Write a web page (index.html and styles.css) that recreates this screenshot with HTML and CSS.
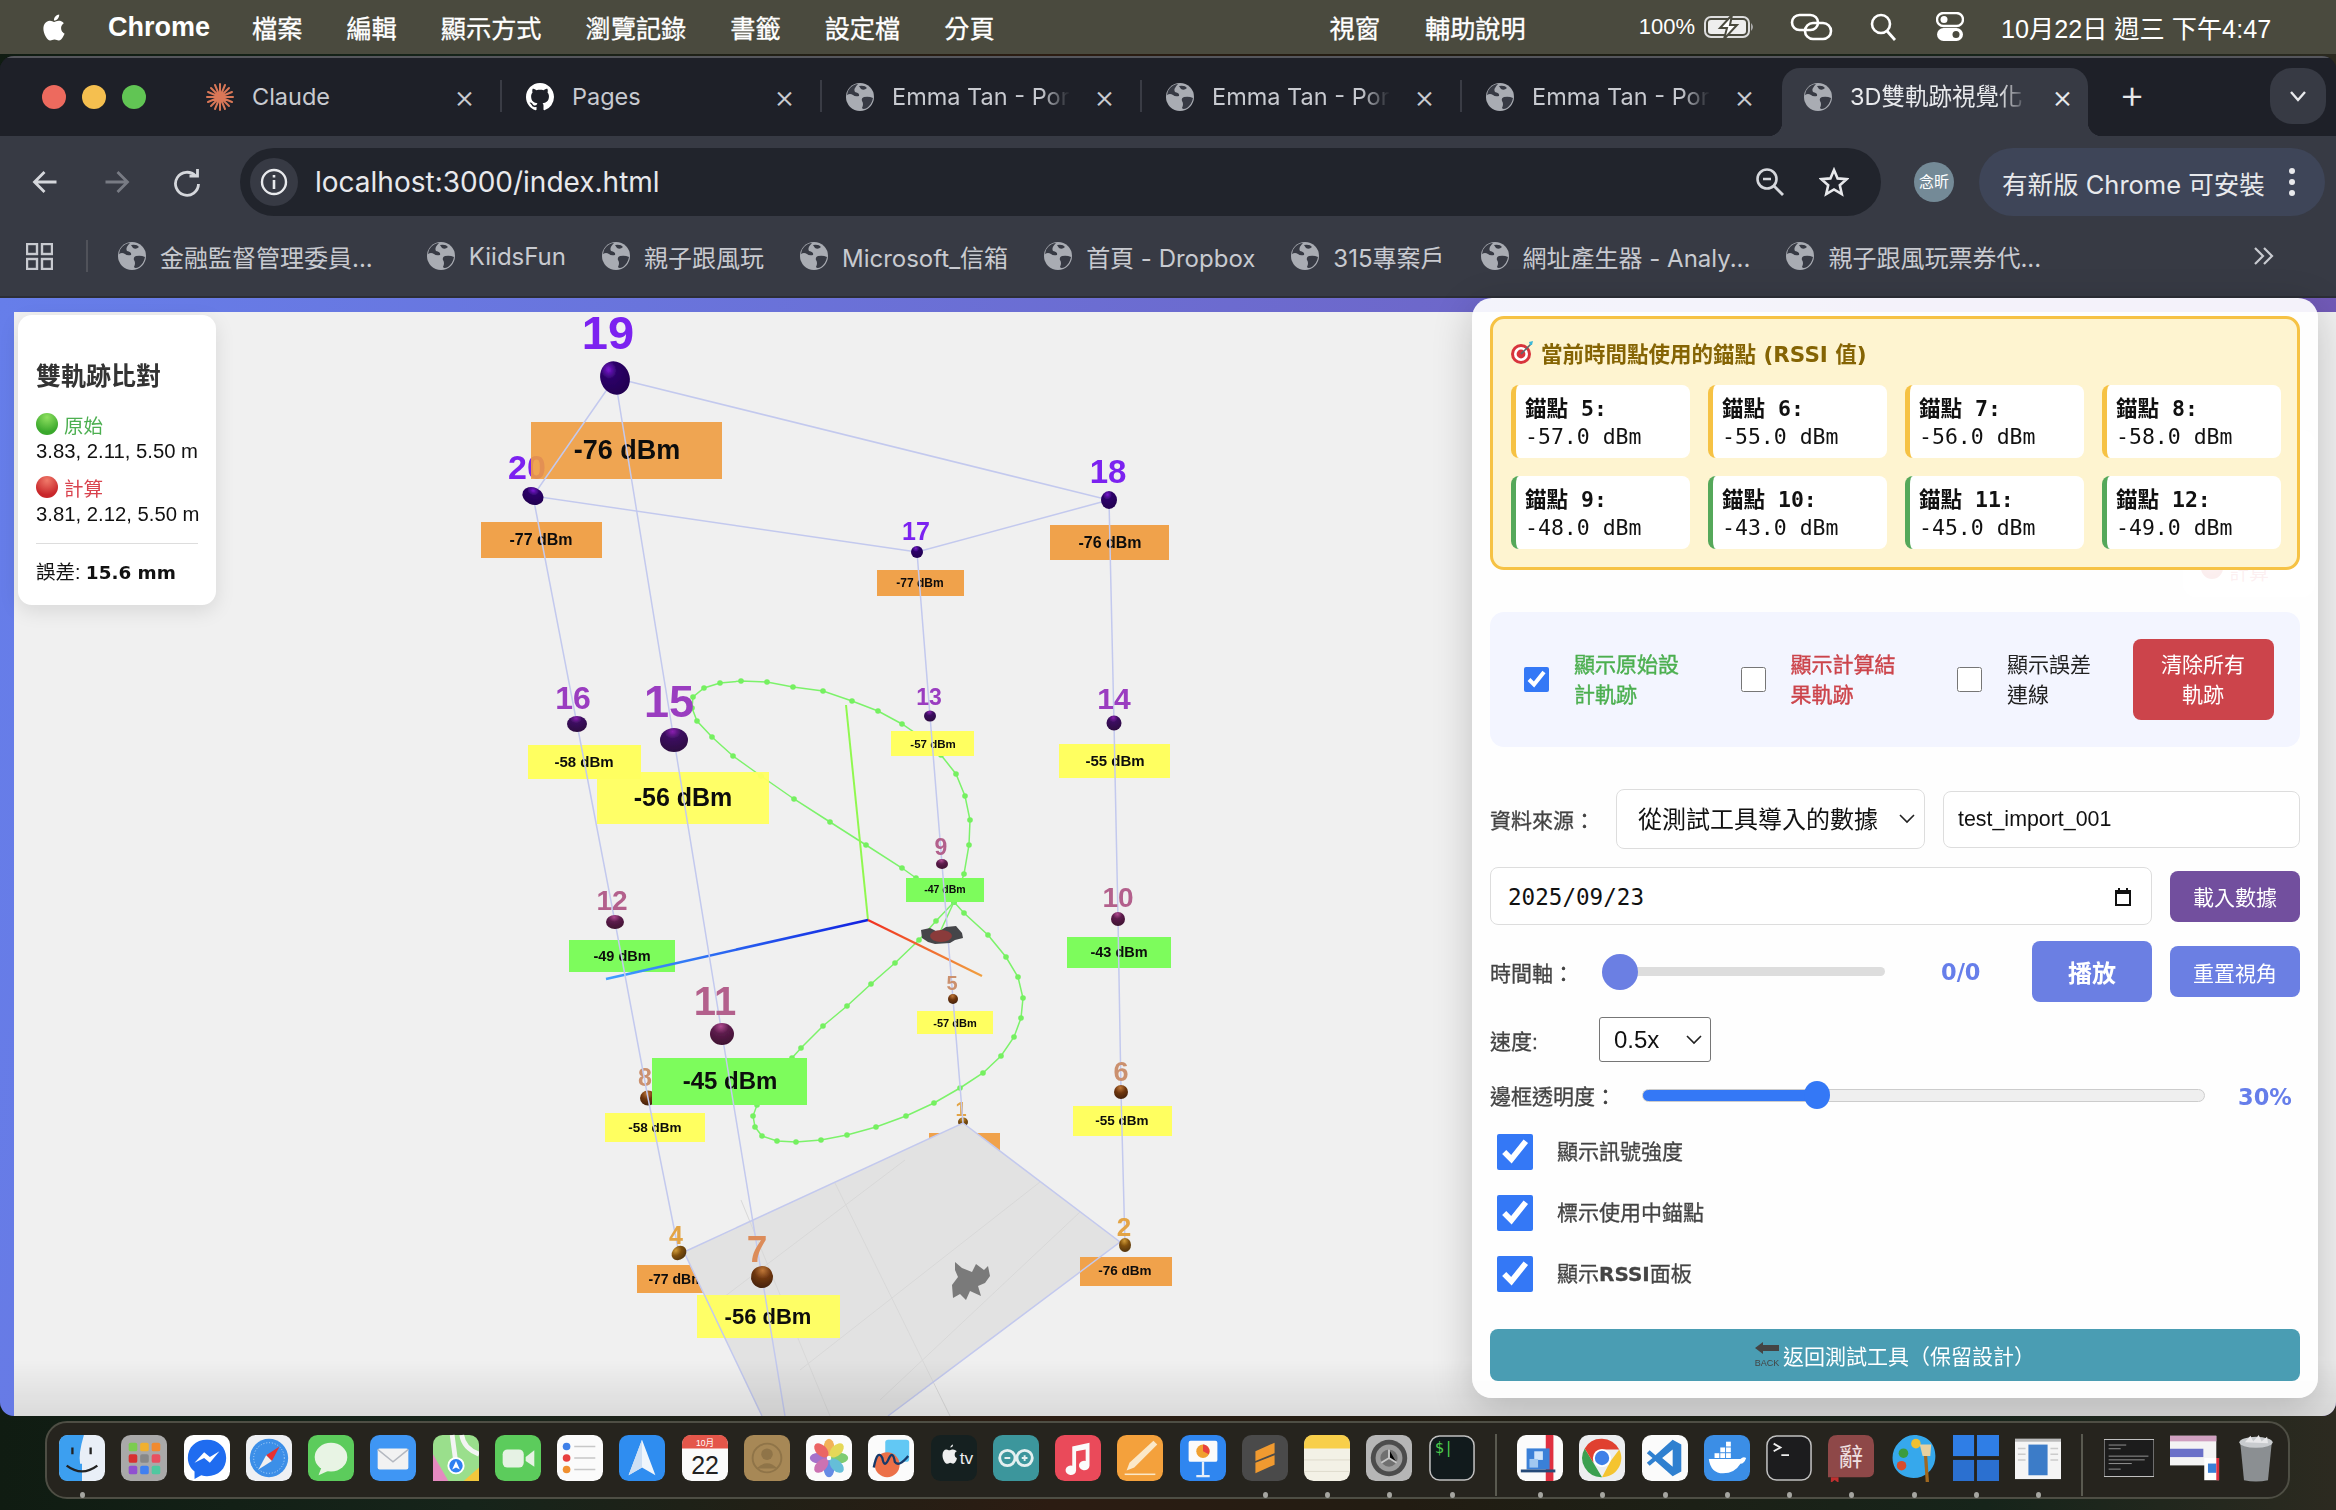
FILE: index.html
```html
<!DOCTYPE html>
<html lang="zh-Hant">
<head>
    <meta charset="UTF-8">
    <title>3D雙軌跡視覺化</title>
    <link rel="stylesheet" href="styles.css">
</head>
<body>
    <svg class="defs" width="0" height="0">
        <symbol id="globe" viewBox="0 0 28 28">
            <circle cx="14" cy="14" r="14" fill="#a9acb3"/>
            <path d="M12 1 Q7 6 9 9 Q14 10 13 13 Q9 14 7 12 Q4 10 1 12 Q1 8 4 5 Q8 1 12 1Z M18 14 Q23 13 27 15 Q26 21 21 25 Q17 27 16 25 Q18 21 16 18 Q15 15 18 14Z M13 3 Q19 2 21 5 Q18 8 15 6Z" fill="#373a44"/>
        </symbol>
    </svg>

    <!-- 메뉴바 -->
    <header class="menubar">
        <svg class="apple" viewBox="0 0 24 24"><path fill="#fff" d="M12.152 6.896c-.948 0-2.415-1.078-3.96-1.04-2.04.027-3.91 1.183-4.961 3.014-2.117 3.675-.546 9.103 1.519 12.09 1.013 1.454 2.208 3.09 3.792 3.039 1.52-.065 2.09-.987 3.935-.987 1.831 0 2.35.987 3.96.948 1.637-.026 2.676-1.48 3.676-2.948 1.156-1.688 1.636-3.325 1.662-3.415-.039-.013-3.182-1.221-3.22-4.857-.026-3.04 2.48-4.494 2.597-4.559-1.429-2.09-3.623-2.324-4.39-2.376-2-.156-3.675 1.09-4.61 1.09zM15.53 3.83c.843-1.012 1.4-2.427 1.245-3.83-1.207.052-2.662.805-3.532 1.818-.78.896-1.454 2.338-1.273 3.714 1.338.104 2.715-.688 3.559-1.701"/></svg>
        <b class="app-name">Chrome</b>
        <nav class="menu-items">
            <span>檔案</span><span>編輯</span><span>顯示方式</span><span>瀏覽記錄</span><span>書籤</span><span>設定檔</span><span>分頁</span>
        </nav>
        <nav class="menu-items menu-right">
            <span>視窗</span><span>輔助說明</span>
        </nav>
        <span class="battery-text">100%</span>
        <svg class="battery" width="52" height="26" viewBox="0 0 52 26"><rect x="1" y="3" width="44" height="20" rx="6" fill="none" stroke="#ddd" stroke-width="2"/><rect x="4" y="6" width="38" height="14" rx="3" fill="#eee"/><path d="M47 9 q4 4 0 8z" fill="#aaa"/><path d="M28 1 L16 14 H23 L20 25 L33 11 H26Z" fill="#fff" stroke="#4a4a3e" stroke-width="2"/></svg>
        <svg class="status-icon link-icon" width="44" height="28" viewBox="0 0 44 28"><g fill="none" stroke="#fff" stroke-width="2.6"><rect x="2" y="2" width="26" height="15" rx="7.5"/><rect x="15" y="10" width="26" height="16" rx="8"/></g></svg>
        <svg class="status-icon search-icon" width="28" height="28" viewBox="0 0 28 28"><circle cx="12" cy="11" r="9" fill="none" stroke="#fff" stroke-width="2.6"/><path d="M18 18 L26 27" stroke="#fff" stroke-width="2.8"/></svg>
        <svg class="status-icon cc-icon" width="28" height="30" viewBox="0 0 28 30"><rect x="1" y="1" width="26" height="13" rx="6.5" fill="none" stroke="#fff" stroke-width="2.4"/><circle cx="8" cy="7.5" r="3.5" fill="#fff"/><rect x="1" y="16" width="26" height="13" rx="6.5" fill="#fff"/><circle cx="20" cy="22.5" r="3.5" fill="#4a4a3e"/></svg>
        <span class="clock">10月22日 週三 下午4:47</span>
    </header>

    <main class="window">
        <!-- 탭 -->
        <div class="tabstrip">
            <div class="lights"><i class="light red"></i><i class="light yellow"></i><i class="light green"></i></div>
            <div class="tab">
                <svg class="favicon" viewBox="0 0 28 28"><g stroke="#d97757" stroke-width="2" stroke-linecap="round"><path d="M14 1V27M1 14H27M5 5L23 23M5 23L23 5M9 2L19 26M19 2L9 26M2 9L26 19M2 19L26 9"/></g></svg>
                <span class="tab-title">Claude</span><span class="tab-close">×</span>
            </div>
            <div class="tab">
                <svg class="favicon" viewBox="0 0 16 16"><path fill="#fff" d="M8 0C3.58 0 0 3.58 0 8c0 3.54 2.29 6.53 5.47 7.59.4.07.55-.17.55-.38 0-.19-.01-.82-.01-1.49-2.01.37-2.53-.49-2.69-.94-.09-.23-.48-.94-.82-1.13-.28-.15-.68-.52-.01-.53.63-.01 1.08.58 1.23.82.72 1.21 1.87.87 2.33.66.07-.52.28-.87.51-1.07-1.78-.2-3.64-.89-3.64-3.95 0-.87.31-1.59.82-2.15-.08-.2-.36-1.02.08-2.12 0 0 .67-.21 2.2.82.64-.18 1.32-.27 2-.27.68 0 1.36.09 2 .27 1.53-1.04 2.2-.82 2.2-.82.44 1.1.16 1.92.08 2.12.51.56.82 1.27.82 2.15 0 3.07-1.87 3.75-3.65 3.95.29.25.54.73.54 1.48 0 1.07-.01 1.93-.01 2.2 0 .21.15.46.55.38A8.013 8.013 0 0016 8c0-4.42-3.58-8-8-8z"/></svg>
                <span class="tab-title">Pages</span><span class="tab-close">×</span>
            </div>
            <div class="tab"><svg class="favicon"><use href="#globe"/></svg><span class="tab-title fade">Emma Tan - Por</span><span class="tab-close">×</span></div>
            <div class="tab"><svg class="favicon"><use href="#globe"/></svg><span class="tab-title fade">Emma Tan - Por</span><span class="tab-close">×</span></div>
            <div class="tab no-sep"><svg class="favicon"><use href="#globe"/></svg><span class="tab-title fade">Emma Tan - Por</span><span class="tab-close">×</span></div>
            <div class="tab active"><svg class="favicon"><use href="#globe"/></svg><span class="tab-title fade">3D雙軌跡視覺化</span><span class="tab-close">×</span></div>
            <span class="new-tab">+</span>
            <div class="tab-menu"><svg width="20" height="12" viewBox="0 0 20 12"><path d="M3 2 L10 10 L17 2" fill="none" stroke="#e8e9ec" stroke-width="2.4"/></svg></div>
        </div>

        <div class="toolbar">
            <div class="addr-row">
                <svg class="nav-btn" viewBox="0 0 70 30"><path d="M46 15H25M34 5L24 15L34 25" fill="none" stroke="#d5d7dc" stroke-width="2.8"/></svg>
                <svg class="nav-btn" viewBox="0 0 70 30"><path d="M24 15H45M36 5L46 15L36 25" fill="none" stroke="#787b84" stroke-width="2.8"/></svg>
                <svg class="nav-btn" viewBox="0 0 70 30"><path d="M43 9 A11.5 11.5 0 1 0 46 17" fill="none" stroke="#d5d7dc" stroke-width="2.8"/><path d="M37 9 H45 V2" fill="none" stroke="#d5d7dc" stroke-width="2.8"/></svg>
                <div class="addr-pill">
                    <div class="info-chip"><svg width="28" height="28" viewBox="0 0 28 28"><circle cx="14" cy="14" r="12" fill="none" stroke="#e8e9ec" stroke-width="2.4"/><path d="M14 12V21M14 7V9.6" stroke="#e8e9ec" stroke-width="2.6"/></svg></div>
                    <span class="url">localhost:3000/index.html</span>
                    <svg class="pill-icon zoom-icon" width="30" height="30" viewBox="0 0 30 30"><circle cx="12" cy="12" r="9.5" fill="none" stroke="#d5d7dc" stroke-width="2.6"/><path d="M8 12H16" stroke="#d5d7dc" stroke-width="2.4"/><path d="M19 19L28 28" stroke="#d5d7dc" stroke-width="2.8"/></svg>
                    <svg class="pill-icon star-icon" width="30" height="30" viewBox="0 0 30 30"><path d="M15 3 L18.6 11.4 L27.6 12.2 L20.8 18.2 L22.8 27 L15 22.4 L7.2 27 L9.2 18.2 L2.4 12.2 L11.4 11.4Z" fill="none" stroke="#e8e9ec" stroke-width="2.6"/></svg>
                </div>
                <span class="avatar">念昕</span>
                <div class="update-pill"><span>有新版 Chrome 可安裝</span><svg width="8" height="30" viewBox="0 0 8 30"><circle cx="4" cy="4" r="3" fill="#e8e9ec"/><circle cx="4" cy="15" r="3" fill="#e8e9ec"/><circle cx="4" cy="26" r="3" fill="#e8e9ec"/></svg></div>
            </div>
            <div class="bookmarks">
                <svg class="apps" width="27" height="27" viewBox="0 0 27 27"><g fill="none" stroke="#c8cad0" stroke-width="2.4"><rect x="1" y="1" width="10" height="10"/><rect x="16" y="1" width="10" height="10"/><rect x="1" y="16" width="10" height="10"/><rect x="16" y="16" width="10" height="10"/></g></svg>
                <i class="bm-sep"></i>
                <span class="bm bm-first"><svg class="bm-icon"><use href="#globe"/></svg>金融監督管理委員...</span>
                <span class="bm"><svg class="bm-icon"><use href="#globe"/></svg>KiidsFun</span>
                <span class="bm"><svg class="bm-icon"><use href="#globe"/></svg>親子跟風玩</span>
                <span class="bm"><svg class="bm-icon"><use href="#globe"/></svg>Microsoft_信箱</span>
                <span class="bm"><svg class="bm-icon"><use href="#globe"/></svg>首頁 - Dropbox</span>
                <span class="bm"><svg class="bm-icon"><use href="#globe"/></svg>315專案戶</span>
                <span class="bm"><svg class="bm-icon"><use href="#globe"/></svg>網址產生器 - Analy...</span>
                <span class="bm"><svg class="bm-icon"><use href="#globe"/></svg>親子跟風玩票券代...</span>
                <svg class="bm-more" width="22" height="20" viewBox="0 0 22 20"><path d="M2 2 L10 10 L2 18 M11 2 L19 10 L11 18" fill="none" stroke="#c8cad0" stroke-width="2.2"/></svg>
            </div>
        </div>

        <div class="page">
            <div class="stage">
                <!-- 3D 장면: 좌표는 화면 좌표 그대로 -->
                <svg class="scene" width="2322" height="1104" viewBox="14 312 2322 1104">
                    <defs>
                        <radialGradient id="ball-violet" cx=".4" cy=".2" r=".8"><stop offset="0" stop-color="#7a18d0"/><stop offset=".35" stop-color="#2c0468"/><stop offset="1" stop-color="#220050"/></radialGradient>
                        <radialGradient id="ball-purple" cx=".45" cy=".15" r=".85"><stop offset="0" stop-color="#8a20b0"/><stop offset=".35" stop-color="#3c1060"/><stop offset="1" stop-color="#2c0a40"/></radialGradient>
                        <radialGradient id="ball-plum" cx=".45" cy=".15" r=".85"><stop offset="0" stop-color="#b04a90"/><stop offset=".4" stop-color="#5c1c4c"/><stop offset="1" stop-color="#3e1030"/></radialGradient>
                        <radialGradient id="ball-brown" cx=".45" cy=".2" r=".85"><stop offset="0" stop-color="#c07838"/><stop offset=".45" stop-color="#6e3610"/><stop offset="1" stop-color="#40200c"/></radialGradient>
                        <radialGradient id="ball-amber" cx=".45" cy=".2" r=".85"><stop offset="0" stop-color="#d09a38"/><stop offset=".45" stop-color="#80500c"/><stop offset="1" stop-color="#4c3008"/></radialGradient>
                        <linearGradient id="axis-red" x1="0" y1="0" x2="1" y2="1"><stop offset="0" stop-color="#f03020"/><stop offset="1" stop-color="#f0a040"/></linearGradient>
                        <linearGradient id="axis-blue" x1="1" y1="0" x2="0" y2="1"><stop offset="0" stop-color="#1020e0"/><stop offset="1" stop-color="#40a0ff"/></linearGradient>
                        <linearGradient id="floor-shade" x1="0" y1="0" x2="0" y2="1"><stop offset="0" stop-color="#000" stop-opacity="0"/><stop offset="1" stop-color="#000" stop-opacity=".09"/></linearGradient>
                        <marker id="dot" markerUnits="userSpaceOnUse" markerWidth="8" markerHeight="8" refX="4" refY="4"><circle cx="4" cy="4" r="2.8" fill="#74f060"/></marker>
                        <filter id="soft"><feGaussianBlur stdDeviation=".55"/></filter>
                    </defs>
                    <g filter="url(#soft)">
                        <!-- 뒤에 깔리는 노드 -->
                        <text class="num c-violet" x="527" y="479" font-size="34">20</text>
                        <text class="num c-tan" x="645" y="1086" font-size="25">8</text>
                        <ellipse cx="648" cy="1098" rx="8" ry="7.5" fill="url(#ball-brown)"/>
                        <text class="num c-amber" x="961" y="1116" font-size="20">1</text>
                        <ellipse cx="963" cy="1122" rx="5" ry="4.5" fill="url(#ball-amber)"/>

                        <rect class="b-orange" x="929" y="1133" width="71" height="40"/>
                        <rect class="b-orange" x="637" y="1265" width="98" height="28"/>
                        <text class="db" x="676" y="1284" font-size="14">-77 dBm</text>

                        <!-- 바닥판 -->
                        <polygon class="plane" points="963,1123 1120,1242 888,1416 762,1416 684,1252"/>
                        <path class="plane-grid" d="M835,1183 L950,1416 M741,1200 L830,1416 M1040,1182 L800,1370 M905,1160 L720,1300 M1080,1212 L880,1400"/>
                        <polygon class="blob-gray" points="955,1262 962,1268 972,1272 976,1264 984,1270 988,1266 990,1276 985,1283 978,1286 981,1296 970,1291 966,1300 960,1294 953,1298 952,1285 958,1277 955,1270"/>

                        <!-- 궤적 -->
                        <polyline class="trail" points="954,902 964,874 969,845 970,820 965,796 956,774 941,755 924,739 902,724 878,711 852,701 823,691 793,687 767,682 741,681 720,683 704,688 693,697 692,708 697,721 712,737 733,756 761,776 794,799 830,822 866,845 902,868 916,878"/>
                        <polyline class="trail" points="954,902 964,913 988,935 1006,957 1018,977 1023,998 1021,1018 1014,1037 1001,1056 983,1073 960,1088 934,1103 906,1116 876,1127 847,1135 821,1140 796,1142 777,1141 762,1136 755,1127 753,1116 757,1105 792,1058 801,1048 823,1026 847,1006 871,984 895,963 919,940 936,921 954,902"/>
                        <line class="trail-plain" x1="954" y1="902" x2="940" y2="932"/>

                        <!-- 라벨 판 -->
                        <rect class="b-orange see-top" x="531" y="422" width="191" height="57"/>
                        <text class="db" x="627" y="459" font-size="27">-76 dBm</text>
                        <rect class="b-orange" x="481" y="522" width="121" height="36"/>
                        <text class="db" x="541" y="545" font-size="16">-77 dBm</text>
                        <rect class="b-orange" x="1050" y="525" width="119" height="35"/>
                        <text class="db" x="1110" y="548" font-size="16">-76 dBm</text>
                        <rect class="b-orange" x="877" y="570" width="87" height="26"/>
                        <text class="db" x="920" y="587" font-size="12">-77 dBm</text>
                        <rect class="b-yellow" x="528" y="745" width="113" height="34"/>
                        <text class="db" x="584" y="767" font-size="15">-58 dBm</text>
                        <rect class="b-yellow see" x="597" y="772" width="172" height="52"/>
                        <text class="db" x="683" y="806" font-size="25">-56 dBm</text>
                        <rect class="b-yellow" x="891" y="731" width="83" height="25"/>
                        <text class="db" x="933" y="748" font-size="11.5">-57 dBm</text>
                        <rect class="b-yellow" x="1059" y="744" width="111" height="34"/>
                        <text class="db" x="1115" y="766" font-size="15">-55 dBm</text>
                        <rect class="b-green" x="906" y="878" width="78" height="24"/>
                        <text class="db" x="945" y="893" font-size="10.5">-47 dBm</text>
                        <rect class="b-green" x="569" y="940" width="106" height="32"/>
                        <text class="db" x="622" y="961" font-size="14.5">-49 dBm</text>
                        <rect class="b-green" x="1067" y="937" width="104" height="31"/>
                        <text class="db" x="1119" y="957" font-size="14.5">-43 dBm</text>
                        <rect class="b-green" x="652" y="1058" width="155" height="47"/>
                        <text class="db" x="730" y="1089" font-size="24">-45 dBm</text>
                        <rect class="b-yellow" x="917" y="1011" width="76" height="23"/>
                        <text class="db" x="955" y="1027" font-size="11">-57 dBm</text>
                        <rect class="b-yellow" x="605" y="1113" width="100" height="29"/>
                        <text class="db" x="655" y="1132" font-size="13.5">-58 dBm</text>
                        <rect class="b-yellow" x="1073" y="1106" width="99" height="30"/>
                        <text class="db" x="1122" y="1125" font-size="13.5">-55 dBm</text>
                        <rect class="b-orange" x="1080" y="1257" width="92" height="29"/>
                        <text class="db" x="1125" y="1275" font-size="13.5">-76 dBm</text>
                        <rect class="b-yellow see" x="697" y="1295" width="143" height="43"/>
                        <text class="db" x="768" y="1324" font-size="22">-56 dBm</text>

                        <!-- 축 -->
                        <line x1="868" y1="920" x2="846" y2="705" stroke="#90f850" stroke-width="2"/>
                        <line x1="868" y1="920" x2="606" y2="979" stroke="url(#axis-blue)" stroke-width="2.6"/>
                        <line x1="868" y1="920" x2="982" y2="976" stroke="url(#axis-red)" stroke-width="2.2"/>

                        <!-- 기둥과 연결선 -->
                        <path class="wire" d="M615,378 L1109,500 L917,552 L533,496 L615,378 L674,740 L722,1034 L762,1277 L785,1416 M533,496 L577,724 L615,922 L648,1098 L679,1253 M1109,500 L1114,723 L1118,919 L1121,1092 L1125,1245 M917,552 L930,716 L942,864 L953,999 L963,1123 M684,1252 L963,1123 L1120,1242 L888,1416 M684,1252 L762,1416"/>

                        <!-- 앞쪽 노드 -->
                        <ellipse cx="533" cy="496" rx="11" ry="8.5" transform="rotate(25 533 496)" fill="url(#ball-violet)"/>
                        <text class="num c-violet" x="608" y="349" font-size="47">19</text>
                        <ellipse cx="615" cy="378" rx="14.5" ry="17" transform="rotate(-22 615 378)" fill="url(#ball-violet)"/>
                        <text class="num c-violet" x="1108" y="483" font-size="33">18</text>
                        <ellipse cx="1109" cy="500" rx="8" ry="9" fill="url(#ball-violet)"/>
                        <text class="num c-violet" x="916" y="540" font-size="25">17</text>
                        <ellipse cx="917" cy="552" rx="6" ry="6" fill="url(#ball-violet)"/>
                        <text class="num c-purple" x="573" y="709" font-size="32">16</text>
                        <ellipse cx="577" cy="724" rx="10" ry="8" fill="url(#ball-purple)"/>
                        <text class="num c-purple" x="669" y="717" font-size="45">15</text>
                        <ellipse cx="674" cy="740" rx="14" ry="12" fill="url(#ball-purple)"/>
                        <text class="num c-purple" x="929" y="705" font-size="23">13</text>
                        <ellipse cx="930" cy="716" rx="6" ry="5.5" fill="url(#ball-purple)"/>
                        <text class="num c-purple" x="1114" y="709" font-size="30">14</text>
                        <ellipse cx="1114" cy="723" rx="7.5" ry="7.5" fill="url(#ball-purple)"/>
                        <text class="num c-plum" x="941" y="855" font-size="23">9</text>
                        <ellipse cx="942" cy="864" rx="6" ry="5" fill="url(#ball-plum)"/>
                        <text class="num c-plum" x="612" y="910" font-size="28">12</text>
                        <ellipse cx="615" cy="922" rx="9" ry="7" fill="url(#ball-plum)"/>
                        <text class="num c-plum" x="1118" y="907" font-size="28">10</text>
                        <ellipse cx="1118" cy="919" rx="7" ry="7" fill="url(#ball-plum)"/>
                        <text class="num c-plum" x="715" y="1015" font-size="40">11</text>
                        <ellipse cx="722" cy="1034" rx="12" ry="11" fill="url(#ball-plum)"/>
                        <text class="num c-tan" x="952" y="990" font-size="20">5</text>
                        <ellipse cx="953" cy="999" rx="5" ry="5" fill="url(#ball-brown)"/>
                        <text class="num c-tan" x="1121" y="1081" font-size="27">6</text>
                        <ellipse cx="1121" cy="1092" rx="7" ry="7" fill="url(#ball-brown)"/>
                        <text class="num c-orange" x="757" y="1262" font-size="37">7</text>
                        <ellipse cx="762" cy="1277" rx="11" ry="11" transform="rotate(15 762 1277)" fill="url(#ball-brown)"/>
                        <text class="num c-amber" x="676" y="1244" font-size="25">4</text>
                        <ellipse cx="679" cy="1253" rx="8" ry="6.5" transform="rotate(-40 679 1253)" fill="url(#ball-amber)"/>
                        <text class="num c-amber" x="1124" y="1236" font-size="26">2</text>
                        <ellipse cx="1125" cy="1245" rx="6" ry="7" fill="url(#ball-amber)"/>

                        <!-- 모델 -->
                        <polygon class="blob-dark" points="921,930 930,928 938,932 946,927 956,926 962,933 963,938 955,940 950,943 935,944 928,942 922,938"/>
                        <ellipse cx="941" cy="936" rx="11" ry="6" fill="#8a3a3a"/>

                        <rect x="14" y="1360" width="2322" height="56" fill="url(#floor-shade)"/>
                    </g>
                </svg>
            </div>

            <section class="legend">
                <h3 class="legend-title">雙軌跡比對</h3>
                <div class="legend-row c-ok"><i class="dot dot-green"></i>原始</div>
                <div class="legend-val">3.83, 2.11, 5.50 m</div>
                <div class="legend-row c-bad"><i class="dot dot-red"></i>計算</div>
                <div class="legend-val">3.81, 2.12, 5.50 m</div>
                <div class="legend-err">誤差: <b>15.6 mm</b></div>
            </section>

            <!-- 패널 뒤에 비치는 카드 -->
            <div class="ghost-card"><i class="dot dot-red"></i><span class="c-bad">計算</span></div>

            <aside class="panel">
                <section class="rssi">
                    <h4 class="rssi-title">
                        <svg width="23" height="24" viewBox="0 0 23 24"><circle cx="10" cy="14" r="10" fill="#d8343c"/><circle cx="10" cy="14" r="7" fill="#fff"/><circle cx="10" cy="14" r="4.4" fill="#d8343c"/><path d="M10 14 L20 4" stroke="#5a6a70" stroke-width="1.6"/><path d="M18 2 L22 1 L21 5 L19 5Z" fill="#3cb8d8"/></svg>
                        <span>當前時間點使用的錨點 (RSSI 值)</span>
                    </h4>
                    <div class="rssi-grid">
                        <div class="rssi-card warn"><b>錨點 5:</b><br>-57.0 dBm</div>
                        <div class="rssi-card warn"><b>錨點 6:</b><br>-55.0 dBm</div>
                        <div class="rssi-card warn"><b>錨點 7:</b><br>-56.0 dBm</div>
                        <div class="rssi-card warn"><b>錨點 8:</b><br>-58.0 dBm</div>
                        <div class="rssi-card good"><b>錨點 9:</b><br>-48.0 dBm</div>
                        <div class="rssi-card good"><b>錨點 10:</b><br>-43.0 dBm</div>
                        <div class="rssi-card good"><b>錨點 11:</b><br>-45.0 dBm</div>
                        <div class="rssi-card good"><b>錨點 12:</b><br>-49.0 dBm</div>
                    </div>
                </section>

                <section class="toggles">
                    <label class="toggle"><input type="checkbox" checked><span class="t-green">顯示原始設計軌跡</span></label>
                    <label class="toggle"><input type="checkbox"><span class="t-red">顯示計算結果軌跡</span></label>
                    <label class="toggle"><input type="checkbox"><span class="t-plain">顯示誤差連線</span></label>
                    <button class="btn btn-clear">清除所有軌跡</button>
                </section>

                <div class="row row-source">
                    <span class="field-label w-source">資料來源：</span>
                    <select class="source-select"><option>從測試工具導入的數據</option></select>
                    <input class="text-input" type="text" value="test_import_001">
                </div>
                <div class="row row-date">
                    <div class="date-input"><span>2025/09/23</span>
                        <svg width="16" height="18" viewBox="0 0 16 18"><path d="M0 2H16V18H0Z M2 6V16H14V6Z" fill-rule="evenodd" fill="#111"/><path d="M3 0H5V3H3Z M11 0H13V3H11Z" fill="#111"/></svg>
                    </div>
                    <button class="btn btn-load">載入數據</button>
                </div>
                <div class="row row-time">
                    <span class="field-label w-time">時間軸：</span>
                    <input class="time-range" type="range" min="0" max="100" value="0">
                    <span class="range-val v-time">0/0</span>
                    <button class="btn btn-play">播放</button>
                    <button class="btn btn-reset">重置視角</button>
                </div>
                <div class="row row-speed">
                    <span class="field-label w-speed">速度:</span>
                    <select class="speed-select"><option>0.5x</option></select>
                </div>
                <div class="row row-opacity">
                    <span class="field-label w-opacity">邊框透明度：</span>
                    <input class="opacity-range" type="range" min="0" max="100" value="30">
                    <span class="range-val v-opacity">30%</span>
                </div>
                <label class="check-row"><input type="checkbox" checked><span>顯示訊號強度</span></label>
                <label class="check-row"><input type="checkbox" checked><span>標示使用中錨點</span></label>
                <label class="check-row"><input type="checkbox" checked><span>顯示<b>RSSI</b>面板</span></label>

                <button class="btn btn-back">
                    <svg width="24" height="26" viewBox="0 0 24 26"><path d="M0 6 L8 0 V3 H24 V9 H8 V12Z" fill="#444"/><text x="12" y="24" class="back-word">BACK</text></svg>
                    返回測試工具（保留設計）
                </button>
            </aside>
        </div>
    </main>

    <footer class="dock">
        <i class="run"><svg viewBox="0 0 48 48"><rect width="48" height="48" rx="10" fill="#e9eff7"/><path d="M10 0 H26 Q20 20 22 30 H24 V48 H10 Q0 48 0 38 V10 Q0 0 10 0Z" fill="#3c9ff0"/><path d="M14 13V20M33 13V20M8 32 Q24 44 40 32" fill="none" stroke="#222" stroke-width="2.4"/></svg></i>
        <i><svg viewBox="0 0 48 48"><rect width="48" height="48" rx="10" fill="#a9a9a9"/><g><rect x="8" y="8" width="9" height="9" rx="2" fill="#7ccc50"/><rect x="20" y="8" width="9" height="9" rx="2" fill="#f0b030"/><rect x="32" y="8" width="9" height="9" rx="2" fill="#f08a30"/><rect x="8" y="20" width="9" height="9" rx="2" fill="#d83030"/><rect x="20" y="20" width="9" height="9" rx="2" fill="#888"/><rect x="32" y="20" width="9" height="9" rx="2" fill="#e85060"/><rect x="8" y="32" width="9" height="9" rx="2" fill="#9050d0"/><rect x="20" y="32" width="9" height="9" rx="2" fill="#4080f0"/><rect x="32" y="32" width="9" height="9" rx="2" fill="#50c8a0"/></g></svg></i>
        <i><svg viewBox="0 0 48 48"><rect width="48" height="48" rx="10" fill="#fff"/><path d="M24 5 C12 5 4 13 4 24 C4 30 7 35 11 38 V46 L18 42 Q21 43 24 43 C36 43 44 35 44 24 C44 13 36 5 24 5Z" fill="#1f6cf0"/><path d="M11 29 L21 18 L27 23 L37 17 L27 29 L21 24Z" fill="#fff"/></svg></i>
        <i><svg viewBox="0 0 48 48"><rect width="48" height="48" rx="10" fill="#eef0f3"/><circle cx="24" cy="24" r="20" fill="#3c8fe8"/><circle cx="24" cy="24" r="16" fill="none" stroke="#bcdcfa" stroke-width="1" stroke-dasharray="1 2"/><path d="M35 12 L21 21 L27 27Z" fill="#e83030"/><path d="M13 36 L27 27 L21 21Z" fill="#f0f0f0"/></svg></i>
        <i><svg viewBox="0 0 48 48"><rect width="48" height="48" rx="10" fill="#5ccc5c"/><ellipse cx="24" cy="23" rx="17" ry="15" fill="#e8f4e4"/><path d="M14 34 L11 42 L22 37Z" fill="#e8f4e4"/></svg></i>
        <i><svg viewBox="0 0 48 48"><rect width="48" height="48" rx="10" fill="#3f96f4"/><rect x="8" y="14" width="32" height="22" rx="2" fill="#f2f2f2"/><path d="M8 15 L24 28 L40 15" fill="none" stroke="#b4b8c0" stroke-width="1.5"/></svg></i>
        <i><svg viewBox="0 0 48 48"><rect width="48" height="48" rx="10" fill="#9adf8c"/><path d="M0 20 L16 48 H0Z" fill="#e58ac0"/><path d="M32 48 L48 34 V48Z" fill="#f2c83c"/><path d="M20 0 L24 30 M30 0 Q32 14 48 20" fill="none" stroke="#f4f4f4" stroke-width="5"/><circle cx="24" cy="32" r="8" fill="#2f7ff0" stroke="#fff" stroke-width="2"/><path d="M24 27 L28 36 L24 34 L20 36Z" fill="#fff"/></svg></i>
        <i><svg viewBox="0 0 48 48"><rect width="48" height="48" rx="10" fill="#5ccc5c"/><rect x="8" y="15" width="22" height="19" rx="5" fill="#e6f2e4"/><path d="M32 23 L41 16 V33 L32 27Z" fill="#e6f2e4"/></svg></i>
        <i><svg viewBox="0 0 48 48"><rect width="48" height="48" rx="10" fill="#fbfbfb"/><circle cx="10" cy="12" r="4" fill="#3f80e8"/><circle cx="10" cy="24" r="4" fill="#e84040"/><circle cx="10" cy="36" r="4" fill="#f09030"/><path d="M18 12H40M18 24H40M18 36H40" stroke="#c8c8c8" stroke-width="1.5"/></svg></i>
        <i><svg viewBox="0 0 48 48"><rect width="48" height="48" rx="10" fill="#2f8df0"/><path d="M24 5 L38 42 L24 34 L10 42Z" fill="#f0f6fc"/><path d="M24 5 L24 34 L10 42Z" fill="#cfe0f4"/></svg></i>
        <i><svg viewBox="0 0 48 48"><rect width="48" height="48" rx="10" fill="#fbfbfb"/><path d="M0 14 V10 Q0 0 10 0 H38 Q48 0 48 10 V14Z" fill="#e4564a"/><text x="24" y="11" class="cal-month">10月</text><text x="24" y="41" class="cal-day">22</text></svg></i>
        <i><svg viewBox="0 0 48 48"><rect width="48" height="48" rx="10" fill="#a78856"/><circle cx="24" cy="24" r="15" fill="none" stroke="#8f7448" stroke-width="2"/><circle cx="24" cy="20" r="6" fill="#8f7448"/><path d="M13 35 Q24 24 35 35" fill="#8f7448"/></svg></i>
        <i><svg viewBox="0 0 48 48"><rect width="48" height="48" rx="10" fill="#fbfbfb"/><g opacity=".8"><ellipse cx="24" cy="13" rx="5.5" ry="9" fill="#f0a030"/><ellipse cx="24" cy="35" rx="5.5" ry="9" fill="#4070e0"/><ellipse cx="13" cy="24" rx="9" ry="5.5" fill="#9050c0"/><ellipse cx="35" cy="24" rx="9" ry="5.5" fill="#60c050"/><ellipse cx="16" cy="16" rx="5.5" ry="9" transform="rotate(-45 16 16)" fill="#e84040"/><ellipse cx="32" cy="32" rx="5.5" ry="9" transform="rotate(-45 32 32)" fill="#40b0d0"/><ellipse cx="32" cy="16" rx="5.5" ry="9" transform="rotate(45 32 16)" fill="#e0d030"/><ellipse cx="16" cy="32" rx="5.5" ry="9" transform="rotate(45 16 32)" fill="#c050a0"/></g></svg></i>
        <i><svg viewBox="0 0 48 48"><rect width="48" height="48" rx="10" fill="#fbfbfb"/><rect x="18" y="5" width="25" height="23" rx="3" fill="#62c8f4"/><circle cx="20" cy="31" r="13" fill="#ec7048"/><path d="M6 34 Q10 14 15 24 Q17 36 22 24 Q26 16 28 28 Q32 34 42 22" fill="none" stroke="#163a6a" stroke-width="2.4"/></svg></i>
        <i><svg viewBox="0 0 48 48"><rect width="48" height="48" rx="10" fill="#152020"/><path d="M16 15c-2 0-4 2-4 6 0 5 3 9 5 9s2-1 3-1 2 1 3 1c2 0 4-4 4-6-3-1-3-6 0-7-2-2-4-2-5-2s-2 1-3 1-1-1-3-1z M20 13c1-2 2-3 3-3 0 2-1 3-3 3z" fill="#eee"/><text x="37" y="30" class="tv-word">tv</text></svg></i>
        <i><svg viewBox="0 0 48 48"><rect width="48" height="48" rx="10" fill="#3c969c"/><g fill="none" stroke="#e4f0f0" stroke-width="3"><circle cx="15" cy="24" r="8"/><circle cx="33" cy="24" r="8"/></g><path d="M12 24H18M30 24H36M33 21V27" stroke="#e4f0f0" stroke-width="2"/></svg></i>
        <i><svg viewBox="0 0 48 48"><rect width="48" height="48" rx="10" fill="#ea4a5a"/><path d="M18 12 L36 8 V32 a5.5 5 0 1 1 -4 -5 V15 L22 17 V37 a5.5 5 0 1 1 -4 -5Z" fill="#fbfbfb"/></svg></i>
        <i><svg viewBox="0 0 48 48"><rect width="48" height="48" rx="10" fill="#f4a13c"/><path d="M38 6 L42 10 L18 34 L10 37 L13 29Z" fill="#fbe8c8"/><path d="M8 41H40" stroke="#fbe8c8" stroke-width="1.6"/></svg></i>
        <i><svg viewBox="0 0 48 48"><rect width="48" height="48" rx="10" fill="#2f86f0"/><rect x="9" y="6" width="30" height="22" rx="2" fill="#fbfbfb"/><circle cx="24" cy="17" r="7" fill="#f0a030"/><path d="M24 17 V10 A7 7 0 0 1 30 20Z" fill="#e84040"/><path d="M24 28V42M17 43H31" stroke="#e6eef8" stroke-width="2.4"/></svg></i>
        <i class="run"><svg viewBox="0 0 48 48"><rect width="48" height="48" rx="10" fill="#4a4a4a"/><path d="M34 8 V19 L14 27 V17Z M14 40 V29 L34 21 V31Z" fill="#f09a30"/></svg></i>
        <i class="run"><svg viewBox="0 0 48 48"><rect width="48" height="48" rx="10" fill="#f3f1e6"/><path d="M0 14 V10 Q0 0 10 0 H38 Q48 0 48 10 V14Z" fill="#f8cf4a"/><path d="M0 26H48M0 38H48" stroke="#dcd9cc" stroke-width="1"/></svg></i>
        <i class="run"><svg viewBox="0 0 48 48"><rect width="48" height="48" rx="10" fill="#b6b6b6"/><circle cx="24" cy="24" r="19" fill="#4c4c4c"/><circle cx="24" cy="24" r="14" fill="#9c9c9c"/><circle cx="24" cy="24" r="9" fill="#707070"/><path d="M24 15V24L32 29M24 24L16 29" stroke="#c8c8c8" stroke-width="2"/></svg></i>
        <i class="run"><svg viewBox="0 0 48 48"><rect x="1" y="1" width="46" height="46" rx="10" fill="#111a1c" stroke="#c0c0c0" stroke-width="1.6"/><text x="6" y="19" class="term-word">$|</text></svg></i>
        <b class="dock-sep"></b>
        <i class="run"><svg viewBox="0 0 48 48"><rect width="48" height="48" rx="10" fill="#fbfbfb"/><path d="M30 0 H38 V48 H30Z" fill="#e03040"/><rect x="10" y="14" width="24" height="22" fill="#3a80d8"/><rect x="18" y="17" width="9" height="9" fill="#cfe4fa"/><rect x="13" y="25" width="9" height="9" fill="#a0c8f0"/><rect x="4" y="36" width="36" height="3" fill="#264a78"/></svg></i>
        <i class="run"><svg viewBox="0 0 48 48"><rect width="48" height="48" rx="10" fill="#eceef0"/><path d="M24 4 A20 20 0 0 1 42 15 H24Z" fill="#e04030"/><path d="M42 15 A20 20 0 0 1 24 44 L33 27Z" fill="#f4c430"/><path d="M24 44 A20 20 0 0 1 6 14 L15 29Z" fill="#3aa050"/><path d="M6 14 A20 20 0 0 1 24 4 V15 Q15 15 15 29Z" fill="#e04030"/><circle cx="24" cy="24" r="9.5" fill="#fff"/><circle cx="24" cy="24" r="7.5" fill="#3f80e8"/></svg></i>
        <i class="run"><svg viewBox="0 0 48 48"><rect width="48" height="48" rx="10" fill="#fbfbfb"/><path d="M32 5 L41 10 V38 L32 43 L14 27 L8 32 L5 29 L11 24 L5 19 L8 16 L14 21Z M32 15 L21 24 L32 33Z" fill-rule="evenodd" fill="#2f80d0"/></svg></i>
        <i class="run"><svg viewBox="0 0 48 48"><rect width="48" height="48" rx="10" fill="#3b8ee6"/><path d="M5 25 H38 Q41 22 44 24 Q42 30 38 30 Q32 40 20 40 Q7 40 5 25Z" fill="#fff"/><g fill="#fff"><rect x="11" y="19" width="5" height="5"/><rect x="17" y="19" width="5" height="5"/><rect x="23" y="19" width="5" height="5"/><rect x="17" y="13" width="5" height="5"/><rect x="23" y="13" width="5" height="5"/><rect x="23" y="7" width="5" height="5"/></g></svg></i>
        <i class="run"><svg viewBox="0 0 48 48"><rect x="1" y="1" width="46" height="46" rx="10" fill="#1c1c1e" stroke="#c0c0c0" stroke-width="1.6"/><path d="M8 9 L15 13 L8 17 M16 21 H24" fill="none" stroke="#eee" stroke-width="2"/></svg></i>
        <i class="run"><svg viewBox="0 0 48 48"><path d="M0 44 V10 Q0 0 10 0 H38 Q48 0 48 10 V38 Q48 44 40 44Z" fill="#8e4848"/><text x="24" y="32" class="dict-word">辭</text><path d="M3 44 H11 V50 L7 47 L3 50Z" fill="#c03030"/></svg></i>
        <i class="run"><svg viewBox="0 0 48 48"><path d="M24 0 C40 0 48 12 46 26 C44 40 28 50 12 42 C0 36 -2 18 8 8 Q15 0 24 0Z" fill="#36a8ec"/><circle cx="13" cy="19" r="5" fill="#3c9c3c"/><circle cx="26" cy="9" r="5" fill="#f0c030"/><circle cx="11" cy="32" r="5" fill="#d84c2c"/><path d="M36 20 L38 50" stroke="#a06820" stroke-width="3.4"/><path d="M30 10 H42 L41 22 H33Z" fill="#e8d0a0"/></svg></i>
        <i class="run"><svg viewBox="0 0 48 48"><rect y="0" width="22" height="22" fill="#2f7ee6"/><rect x="25" y="0" width="23" height="22" fill="#2f7ee6"/><rect y="26" width="22" height="22" fill="#2b70d0"/><rect x="25" y="26" width="23" height="22" fill="#2b70d0"/></svg></i>
        <i class="run"><svg viewBox="0 0 48 48"><rect x="0" y="4" width="48" height="42" fill="#f5f5f5"/><rect y="4" width="48" height="3" fill="#bbb"/><rect x="14" y="10" width="20" height="32" fill="#3c7cc8"/><path d="M3 14H11M3 20H11M3 26H11M37 14H45M37 20H45M37 26H45" stroke="#ccc" stroke-width="1.5"/></svg></i>
        <b class="dock-sep"></b>
        <i class="wide"><svg viewBox="0 0 54 40"><rect width="54" height="40" fill="#1c1c1c" stroke="#ccc"/><path d="M5 6H24M5 10H18M5 18H48M5 22H44M5 26H30M5 32H18" stroke="#999" stroke-width="1"/></svg></i>
        <i class="wide"><svg viewBox="0 0 54 48"><rect width="50" height="32" fill="#f4f4f4"/><rect width="50" height="6" fill="#d0a0c0"/><rect y="14" width="36" height="9" fill="#6a70c8"/><rect x="37" y="24" width="16" height="24" fill="#fff"/><rect x="41" y="30" width="9" height="10" fill="#3a80d8"/><rect x="50" y="24" width="3" height="24" fill="#e03040"/></svg></i>
        <i class="trash"><svg viewBox="0 0 48 52"><path d="M7 10 L11 50 Q24 53 37 50 L41 10Z" fill="#8b8f92"/><ellipse cx="24" cy="9" rx="18" ry="6" fill="#c8cbce"/><path d="M12 9 L18 2 L21 8 L27 1 L30 8 L36 3 L37 10Z" fill="#e8e8ea"/></svg></i>
    </footer>
</body>
</html>
```

FILE: styles.css
```css
* { box-sizing: border-box; }

body {
    margin: 0;
    width: 2336px;
    height: 1510px;
    overflow: hidden;
    display: flex;
    flex-direction: column;
    font-family: "Liberation Sans", "Noto Sans CJK TC", sans-serif;
    background: linear-gradient(90deg, #101c12 0%, #16241a 20%, #2c1c12 45%, #221c12 60%, #16241a 85%, #2c2a20 100%);
}
.defs { position: absolute; }

/* 메뉴바 */
.menubar {
    height: 54px;
    flex: none;
    display: flex;
    align-items: center;
    background: #4a4a3e;
    color: #fff;
    font-size: 25.2px;
    padding-left: 41px;
}
.apple { width: 26px; height: 31px; margin-right: 41px; }
.app-name { font-size: 27px; width: 144px; }
.menu-items { display: flex; gap: 44px; -webkit-text-stroke: .3px #fff; }
.menu-right { margin-left: 335px; gap: 45px; }
.battery-text { margin-left: 113px; font-size: 22px; }
.battery { margin-left: 9px; }
.link-icon { margin-left: 34px; }
.search-icon { margin-left: 35px; }
.cc-icon { margin-left: 39px; }
.clock { margin-left: 37px; white-space: nowrap; }

/* 브라우저 창 */
.window {
    margin-top: 2px;
    height: 1360px;
    flex: none;
    display: flex;
    flex-direction: column;
    border-radius: 14px;
    overflow: hidden;
    background: #1e2028;
}
.tabstrip {
    height: 80px;
    flex: none;
    display: flex;
    align-items: flex-end;
    background: #1e2028;
    border-top: 2px solid #55565c;
    color: #c8cad0;
    font-family: "Inter", "Noto Sans CJK TC", sans-serif;
    font-size: 23.5px;
}
.lights { width: 184px; height: 68px; display: flex; gap: 16px; padding: 17px 0 0 42px; }
.light { width: 24px; height: 24px; border-radius: 50%; }
.red { background: #ed6a5e; }
.yellow { background: #f5bf4f; }
.green { background: #61c554; }

.tab {
    position: relative;
    width: 320px;
    height: 68px;
    display: flex;
    padding: 14px 0 0 22px;
}
.tab::after {
    content: "";
    position: absolute;
    right: 2px;
    top: 12px;
    width: 2px;
    height: 32px;
    background: #3a3c45;
}
.tab.no-sep::after { display: none; }
.favicon { width: 28px; height: 30px; flex: none; }
.tab-title {
    width: 178px;
    margin-left: 18px;
    line-height: 30px;
    overflow: hidden;
    white-space: nowrap;
}
.tab-title.fade {
    -webkit-mask-image: linear-gradient(90deg, #000 84%, transparent 100%);
    mask-image: linear-gradient(90deg, #000 84%, transparent 100%);
}
.tab-close { margin-left: 24px; font-size: 32px; line-height: 30px; font-weight: 300; }
.tab.active {
    width: 306px;
    margin-left: -2px;
    background: #373a44;
    border-radius: 18px 18px 0 0;
    color: #e8e9ec;
    padding-left: 22px;
}
/* 활성 탭 아래쪽의 곡선 */
.tab.active::before, .tab.active::after {
    content: "";
    display: block;
    position: absolute;
    top: auto;
    bottom: 0;
    width: 14px;
    height: 14px;
}
.tab.active::before {
    left: -14px;
    background: radial-gradient(circle at 0 0, transparent 14px, #373a44 14.5px);
}
.tab.active::after {
    right: -14px;
    background: radial-gradient(circle at 100% 0, transparent 14px, #373a44 14.5px);
}
.new-tab { margin: 0 0 26px 31px; font-size: 40px; line-height: 32px; font-weight: 300; color: #e8e9ec; }
.tab-menu {
    width: 56px;
    height: 56px;
    margin: 0 0 12px 125px;
    border-radius: 22px;
    background: #373a44;
    display: flex;
    align-items: center;
    justify-content: center;
}

.toolbar {
    height: 162px;
    flex: none;
    background: #373a44;
    border-bottom: 2px solid #2c2e36;
    font-family: "Inter", "Noto Sans CJK TC", sans-serif;
}
.addr-row { height: 92px; display: flex; align-items: center; padding-left: 10px; }
.nav-btn { width: 71px; height: 30px; flex: none; }
.addr-pill {
    width: 1641px;
    height: 68px;
    margin-left: 17px;
    display: flex;
    align-items: center;
    padding-left: 10px;
    border-radius: 34px;
    background: #21242c;
}
.info-chip {
    width: 48px;
    height: 48px;
    border-radius: 50%;
    background: #373a44;
    display: flex;
    align-items: center;
    justify-content: center;
}
.url { margin-left: 17px; font-size: 28px; color: #e8e9ec; }
.zoom-icon { margin-left: auto; }
.star-icon { margin: 0 32px 0 34px; }
.avatar {
    width: 40px;
    height: 40px;
    margin-left: 33px;
    border-radius: 50%;
    background: #748a97;
    color: #fff;
    font-size: 15px;
    line-height: 40px;
    text-align: center;
    white-space: nowrap;
}
.update-pill {
    width: 346px;
    height: 68px;
    margin-left: 25px;
    display: flex;
    align-items: center;
    justify-content: space-between;
    padding: 0 29px 0 23px;
    border-radius: 34px;
    background: #3e4558;
    color: #e8e9ec;
    font-size: 25.5px;
}

.bookmarks {
    height: 56px;
    display: flex;
    align-items: center;
    gap: 36px;
    padding-left: 26px;
    color: #c8cad0;
    font-size: 24px;
    white-space: nowrap;
}
.apps { margin-right: -3px; }
.bm-sep { width: 2px; height: 32px; background: #50525a; margin-right: -6px; }
.bm { display: flex; align-items: center; gap: 14px; }
.bm-first { margin-right: 18px; }
.bm-icon { width: 28px; height: 30px; }
.bm-more { margin: 0 61px 0 auto; }

/* 페이지 */
.page {
    position: relative;
    flex: 1;
    display: flex;
    padding: 14px 0 0 14px;
    background: linear-gradient(100deg, #667eea 0%, #764ba2 130%);
}
.stage { flex: 1; background: #f0f0f0; overflow: hidden; }
.scene { display: block; }

.num { font-weight: bold; text-anchor: middle; }
.c-violet { fill: #7b22f0; }
.c-purple { fill: #9a3cc0; }
.c-plum { fill: #b3618c; }
.c-tan { fill: #cb906e; }
.c-orange { fill: #dc8c5a; }
.c-amber { fill: #e3a445; }
.db { font-weight: bold; text-anchor: middle; fill: #0c0c0c; }
.b-orange { fill: #f0a24c; }
.b-yellow { fill: #ffff60; }
.b-green { fill: #7dfc5c; }
.see { opacity: .96; }
.see-top { fill: #ee9c40; opacity: .9; }
.plane { fill: #e2e2e2; }
.plane-grid { fill: none; stroke: #d8d8d8; stroke-width: 1; }
.blob-gray { fill: #7a7a7a; }
.blob-dark { fill: #45454a; }
.trail { fill: none; stroke: #7cf26a; stroke-width: 1.5; marker-start: url(#dot); marker-mid: url(#dot); marker-end: url(#dot); }
.trail-plain { stroke: #7cf26a; stroke-width: 1.5; }
.wire { fill: none; stroke: #c3c9ee; stroke-width: 1.5; }

.legend {
    position: absolute;
    left: 18px;
    top: 17px;
    width: 198px;
    height: 290px;
    padding: 45px 18px 0;
    background: #fff;
    border-radius: 14px;
    box-shadow: 0 6px 20px rgba(0, 0, 0, .1);
    font-size: 19.5px;
    white-space: nowrap;
}
.legend-title { margin: 0 0 18px; font-size: 25px; line-height: 32px; color: #333; }
.legend-row { display: flex; align-items: center; gap: 6px; height: 28px; }
.legend-val { height: 28px; line-height: 27px; font-size: 20.3px; color: #111; }
.legend-val + .legend-row { margin-top: 7px; }
.dot { width: 22px; height: 22px; border-radius: 50%; display: block; flex: none; }
.dot-green { background: radial-gradient(circle at 50% 20%, #8fe060, #3aa82c 70%); }
.dot-red { background: radial-gradient(circle at 50% 20%, #f07a6a, #c8262a 70%); }
.c-ok { color: #4caf50; }
.c-bad { color: #d9434e; }
.legend-err { margin-top: 14px; padding-top: 14px; border-top: 1px solid #ddd; line-height: 28px; color: #111; }
.legend-err b { font-family: "DejaVu Sans", sans-serif; font-size: 18.4px; }

.ghost-card {
    position: absolute;
    left: 2183px;
    top: 132px;
    width: 132px;
    height: 167px;
    padding: 127px 0 0 18px;
    display: flex;
    gap: 6px;
    background: #fff;
    border-radius: 14px;
    font-size: 20px;
}

.panel {
    position: absolute;
    left: 1472px;
    top: 0;
    width: 846px;
    height: 1100px;
    padding: 18px 18px 0;
    background: rgba(255, 255, 255, .92);
    border-radius: 20px;
    box-shadow: 0 10px 40px rgba(0, 0, 0, .2);
    font-size: 21px;
}
.rssi {
    height: 254px;
    padding: 19px 18px 0;
    background: #fef4d0;
    border: 3px solid #f6c244;
    border-radius: 14px;
}
.rssi-title {
    margin: 0;
    display: flex;
    align-items: center;
    gap: 7px;
    height: 28px;
    font-family: "DejaVu Sans", "Noto Sans CJK TC", sans-serif;
    font-size: 21.5px;
    font-weight: bold;
    color: #856404;
    white-space: nowrap;
}
.rssi-grid {
    display: grid;
    grid-template-columns: repeat(4, 179px);
    gap: 18px;
    margin-top: 19px;
}
.rssi-card {
    height: 73px;
    padding: 10px 0 0 9px;
    background: #fff;
    border-left: 5px solid #f6c244;
    border-radius: 8px;
    font-family: "DejaVu Sans Mono", "Noto Sans CJK TC", monospace;
    font-size: 21.5px;
    line-height: 28px;
    color: #111;
    white-space: nowrap;
}
.rssi-card.good { border-left-color: #55a85a; }

.toggles {
    height: 135px;
    margin-top: 42px;
    display: flex;
    align-items: center;
    padding-left: 34px;
    background: #f3f5ff;
    border-radius: 14px;
}
.toggle { width: 216.5px; display: flex; align-items: center; gap: 25px; line-height: 30px; flex: none; }
.toggle input { width: 25px; height: 25px; margin: 0; flex: none; accent-color: #3478f6; }
.toggle span { width: 108px; }
.toggle .t-plain { width: 88px; color: #222; }
.t-green { color: #4caf50; -webkit-text-stroke: .4px #4caf50; }
.t-red { color: #cc444b; -webkit-text-stroke: .4px #cc444b; }
.btn {
    border: 0;
    border-radius: 8px;
    color: #fff;
    font: inherit;
    background: #6b7fe3;
}
.btn-clear { width: 141px; height: 81px; margin-left: -41px; line-height: 30px; background: #cc444b; padding: 0 24px; }

.row { display: flex; align-items: center; }
.field-label { flex: none; color: #444; white-space: nowrap; -webkit-text-stroke: .3px #444; }
.row-source { height: 60px; margin-top: 42px; gap: 18px; }
.w-source { width: 108px; }
.source-select {
    width: 309px;
    height: 60px;
    padding-left: 21px;
    border: 1px solid #ddd;
    border-radius: 8px;
    appearance: none;
    font: inherit;
    font-size: 24px;
    color: #111;
    background: #fff url("data:image/svg+xml,%3Csvg xmlns='http://www.w3.org/2000/svg' width='16' height='10'%3E%3Cpath d='M1 1l7 7 7-7' fill='none' stroke='%23222' stroke-width='1.6'/%3E%3C/svg%3E") no-repeat right 9px center;
}
.text-input {
    flex: 1;
    min-width: 0;
    height: 57px;
    padding: 0 14px;
    border: 1px solid #ddd;
    border-radius: 8px;
    font: inherit;
    font-size: 21.4px;
    color: #111;
    background: #fff;
}
.row-date { height: 58px; margin-top: 18px; gap: 18px; }
.date-input {
    flex: 1;
    height: 58px;
    display: flex;
    align-items: center;
    justify-content: space-between;
    padding: 2px 20px 0 17px;
    border: 1px solid #ddd;
    border-radius: 8px;
    background: #fff;
    font-family: "DejaVu Sans Mono", monospace;
    font-size: 22.6px;
    color: #111;
}
.btn-load { width: 130px; height: 51px; flex: none; background: #724f9e; }

.row-time { height: 61px; margin-top: 16px; }
.w-time { width: 112px; }
.time-range, .opacity-range {
    appearance: none;
    margin: 0;
    padding: 0;
    flex: none;
    border-radius: 7px;
}
.time-range { width: 283px; height: 9px; background: #ddd; }
.time-range::-webkit-slider-thumb {
    appearance: none;
    width: 36px;
    height: 36px;
    border-radius: 50%;
    background: #6b7fe3;
}
.range-val { flex: none; font-family: "DejaVu Sans", sans-serif; font-weight: bold; color: #667eea; font-size: 22.5px; }
.v-time { width: 91px; margin-left: 56px; }
.btn-play { width: 120px; height: 61px; flex: none; font-size: 24px; font-weight: bold; }
.btn-reset { width: 130px; height: 51px; flex: none; margin-left: 18px; }

.row-speed { height: 45px; margin-top: 15px; }
.w-speed { width: 109px; }
.speed-select {
    width: 112px;
    height: 45px;
    padding-left: 14px;
    border: 1px solid #767676;
    border-radius: 3px;
    appearance: none;
    font: inherit;
    font-size: 24px;
    color: #111;
    background: #fff url("data:image/svg+xml,%3Csvg xmlns='http://www.w3.org/2000/svg' width='16' height='10'%3E%3Cpath d='M1 1l7 7 7-7' fill='none' stroke='%23222' stroke-width='1.6'/%3E%3C/svg%3E") no-repeat right 8px center;
}

.row-opacity { height: 30px; margin-top: 18px; }
.w-opacity { width: 152px; }
.opacity-range {
    width: 563px;
    height: 13px;
    border: 1px solid #ccc;
    background: linear-gradient(90deg, #3478f6 175px, #efefef 175px);
}
.opacity-range::-webkit-slider-thumb {
    appearance: none;
    width: 26px;
    height: 28px;
    border-radius: 50%;
    background: #3478f6;
}
.v-opacity { margin-left: 33px; padding-top: 3px; }

.check-row { height: 36px; margin: 25px 0 0 7px; display: flex; align-items: center; gap: 24px; color: #444; }
.check-row input { width: 36px; height: 36px; margin: 0; accent-color: #3478f6; flex: none; }
.check-row span { padding-bottom: 4px; -webkit-text-stroke: .3px #444; }
.check-row b { font-family: "DejaVu Sans", sans-serif; font-size: 20px; font-weight: bold; }
.row-opacity + .check-row { margin-top: 24px; }

.btn-back {
    width: 810px;
    height: 52px;
    margin-top: 37px;
    display: flex;
    align-items: center;
    justify-content: center;
    gap: 4px;
    background: #4a9db3;
}
.back-word { font-size: 9px; fill: #444; text-anchor: middle; }

/* 독 */
.dock {
    width: 2245px;
    height: 78px;
    margin: 5px 0 0 45px;
    display: flex;
    align-items: flex-start;
    gap: 16.25px;
    padding: 11px 0 0 12px;
    background: #26241e;
    border: 2px solid #4e4e44;
    border-radius: 22px;
}
.dock i { position: relative; width: 46px; height: 48px; flex: none; display: block; font-style: normal; }
.dock svg { display: block; width: 100%; height: 100%; }
.dock i.run::after {
    content: "";
    position: absolute;
    left: 21px;
    top: 58px;
    width: 5px;
    height: 6px;
    border-radius: 50%;
    background: #a5a5a0;
}
.dock i.wide { width: 50px; }
.dock i.trash { margin-left: -3px; }
.dock-sep { width: 2px; height: 62px; background: #5a5a50; flex: none; margin: 0 4px; }
.cal-month { font-size: 9px; fill: #fff; text-anchor: middle; }
.cal-day { font-size: 26px; fill: #222; text-anchor: middle; }
.tv-word { font-size: 18px; fill: #eee; text-anchor: middle; }
.term-word { font-size: 16px; font-family: "DejaVu Sans Mono", monospace; fill: #4ccc4c; }
.dict-word { font-size: 26px; fill: #f0e0e0; text-anchor: middle; font-family: "Noto Sans CJK TC", sans-serif; }
```
